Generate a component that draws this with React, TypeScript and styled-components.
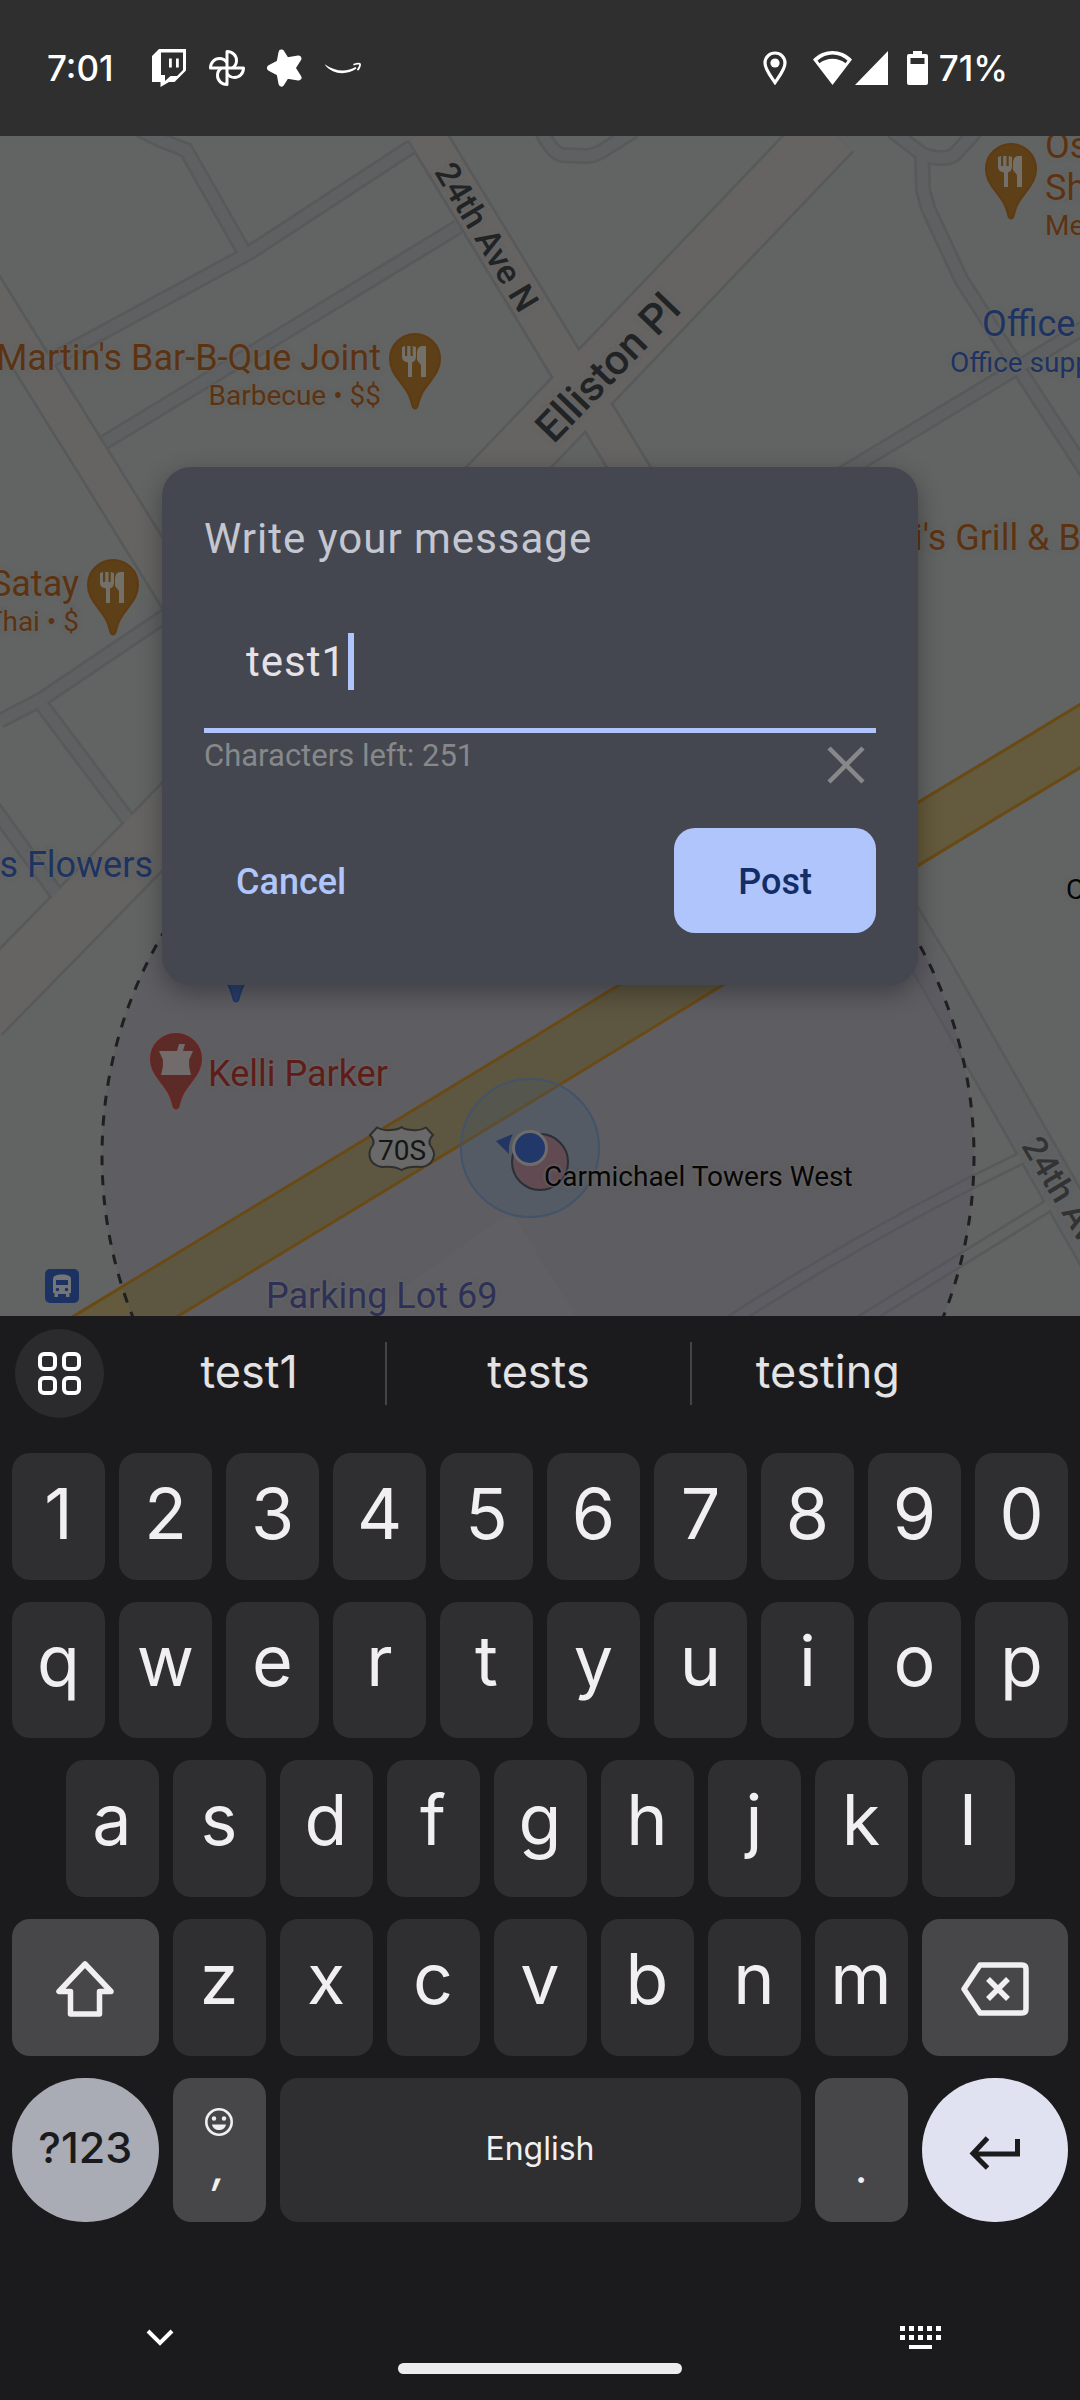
import React, { useState } from "react";
import styled, { createGlobalStyle, css } from "styled-components";

const GlobalStyle = createGlobalStyle`
  *, *::before, *::after { box-sizing: border-box; }
  html, body { margin: 0; padding: 0; background: #1b1b1d; }
  button, input { font: inherit; color: inherit; border: 0; background: none; margin: 0; padding: 0; }
  button { cursor: pointer; }
  svg { display: block; flex: none; }
`;

const systemFont = `Inter, "Liberation Sans", sans-serif`;
const appFont = `Roboto, "Liberation Sans", sans-serif`;

const Screen = styled.div`
  min-height: 100vh;
  display: flex;
  flex-direction: column;
  overflow: hidden;
  font-family: ${appFont};
`;

/* ---------- status bar ---------- */

const StatusBar = styled.header`
  height: 136px;
  padding: 0 72px 0 47px;
  display: flex;
  align-items: center;
  justify-content: space-between;
  background: #2f2f2f;
  color: #fff;
  font: 500 35px/40px ${systemFont};
`;

const StatusGroup = styled.div<{ $gap: number }>`
  display: flex;
  align-items: center;
  gap: ${(p) => p.$gap}px;
`;

const Clock = styled.time`
  width: 82px;
`;

const SignalPair = styled.span`
  display: flex;
  gap: 3px;
  margin: 0 19px 0 26px;
`;

const BatteryLevel = styled.span`
  margin-left: 11px;
`;

function TwitchIcon() {
  return (
    <svg width="36" height="38" viewBox="0 0 36 38">
      <path d="M8 0h27v21.500L23.500 33H18l-8.500 5v-5H1V7z" fill="#fff" />
      <path d="M10 3.500h22v17.500l-6 6h-6.500L14 32v-6H10z" fill="#2f2f2f" />
      <path d="M18 9.500h2.800v9H18zM25 9.500h2.800v9H25z" fill="#fff" />
    </svg>
  );
}

function PinwheelIcon() {
  return (
    <svg width="36" height="38" viewBox="0 0 36 38" fill="none" stroke="#fff" strokeWidth="3" strokeLinejoin="round">
      <path d="M18 19V2.500c5.500 0 9.500 4 9.500 9 0 3-1.500 5.800-4 7.500" />
      <path d="M18 19h16.500c0 5.500-4 9.500-9 9.500-3 0-5.800-1.500-7.500-4" />
      <path d="M18 19v16.500c-5.500 0-9.500-4-9.500-9 0-3 1.500-5.800 4-7.500" />
      <path d="M18 19H1.500c0-5.500 4-9.500 9-9.500 3 0 5.800 1.500 7.500 4" />
    </svg>
  );
}

function StarIcon() {
  return (
    <svg width="36" height="38" viewBox="0 0 36 38">
      <path
        d="M14.500 3.500l5 8L31.500 9.500 25.500 19l6 9.500-12-2L14.500 34.500l-2-10.500L3 19l9.500-5z"
        fill="#fff"
        stroke="#fff"
        strokeWidth="6"
        strokeLinejoin="round"
      />
    </svg>
  );
}

function SmileArrowIcon() {
  return (
    <svg width="36" height="38" viewBox="0 0 36 38">
      <path d="M0 15.500c11 7.500 22 7.500 30.500 2.500l1 1.500c-9 6.500-23 7-31.500-3.500z" fill="#fff" />
      <path d="M28.500 15.800c3-1.500 6.300-1.300 6.500-.8.300.8-.5 4.200-2.500 6.200" fill="none" stroke="#fff" strokeWidth="1.800" />
    </svg>
  );
}

function LocationIcon() {
  return (
    <svg width="24" height="34" viewBox="0 0 24 34">
      <path d="M12 2c5.500 0 10 4.300 10 10 0 6.500-6 13.500-10 19.500C8 25.500 2 18.500 2 12 2 6.300 6.500 2 12 2z" fill="none" stroke="#fff" strokeWidth="3.200" />
      <circle cx="12" cy="12" r="4.600" fill="#fff" />
    </svg>
  );
}

function WifiIcon() {
  return (
    <svg width="39" height="34" viewBox="0 0 39 34">
      <path d="M0 8.500C11-2.800 28-2.800 39 8.500L19.500 34z" fill="#fff" />
      <path d="M4.500 9.500C13 1.500 26 1.500 34.500 9.500l-2 2.700c-7-6-19-6-26 0z" fill="#2f2f2f" />
    </svg>
  );
}

function CellIcon() {
  return (
    <svg width="33" height="34" viewBox="0 0 33 34">
      <path d="M33 0v34H0z" fill="#fff" />
    </svg>
  );
}

function BatteryIcon() {
  return (
    <svg width="21" height="34" viewBox="0 0 21 34">
      <path d="M6 0h9v3h4a2 2 0 0 1 2 2v27a2 2 0 0 1-2 2H2a2 2 0 0 1-2-2V5a2 2 0 0 1 2-2h4z" fill="#fff" />
      <path d="M3.500 7h14v6h-14z" fill="#2f2f2f" />
    </svg>
  );
}

/* ---------- map ---------- */

const Stage = styled.main`
  flex: 1 0 auto;
  min-height: 1180px;
  display: grid;
  place-items: center;
  position: relative;
  overflow: hidden;
  background: #616462;
`;

const MapCanvas = styled.div`
  position: absolute;
  top: 0;
  left: 50%;
  width: 1080px;
  height: 1180px;
  margin-left: -540px;
`;

type Tone = "food" | "shop" | "health" | "parking" | "plain";

const tones: Record<Tone, string> = {
  food: "#5c3312",
  shop: "#1d3361",
  health: "#5f1d19",
  parking: "#2e3157",
  plain: "#060606",
};

const PlaceLabel = styled.div<{ $tone: Tone; $left?: number; $right?: number; $top: number }>`
  position: absolute;
  top: ${(p) => p.$top}px;
  ${(p) => (p.$left !== undefined ? css`left: ${p.$left}px;` : css`right: ${p.$right}px; text-align: right;`)}
  color: ${(p) => tones[p.$tone]};
  white-space: nowrap;
  text-shadow: 0 0 3px #666564, 0 0 3px #666564, 0 0 5px #666564;
`;

const PlaceName = styled.div`
  font-size: 36px;
  line-height: 42px;
`;

const PlaceNote = styled.div`
  font-size: 28px;
  line-height: 34px;
`;

const StreetLabel = styled.div<{ $x: number; $y: number; $angle: number; $size: number; $faded?: boolean }>`
  position: absolute;
  left: ${(p) => p.$x}px;
  top: ${(p) => p.$y}px;
  transform: translate(-50%, -50%) rotate(${(p) => p.$angle}deg);
  font-size: ${(p) => p.$size}px;
  font-weight: 500;
  line-height: 1;
  white-space: nowrap;
  color: ${(p) => (p.$faded ? "#313335" : "#212324")};
  text-shadow: 0 0 4px #656464, 0 0 4px #656464;
`;

const ShieldText = styled.div`
  position: absolute;
  left: 370px;
  top: 998px;
  width: 64px;
  text-align: center;
  font-size: 28px;
  line-height: 34px;
  color: #161616;
`;

type RoadKind = "street" | "alley" | "drive";
type Road = { d: string; kind: RoadKind };

const roads: Road[] = [
  { kind: "alley", d: "M140 130L160 140 186 150 243 250" },
  { kind: "alley", d: "M411 147L249 253 50 361" },
  { kind: "alley", d: "M458 227L105 442" },
  { kind: "alley", d: "M180 606L42 699 0 721" },
  { kind: "alley", d: "M42 705L130 822" },
  { kind: "alley", d: "M-6 808L58 896" },
  { kind: "alley", d: "M541 130Q552 153 562 155L586 156Q594 156 602 151L634 131" },
  { kind: "alley", d: "M892 131L922 154Q930 158 942 158 952 158 956 153L976 131" },
  { kind: "alley", d: "M922 154L923 190 928 208 961 279 1000 340 1090 478" },
  { kind: "alley", d: "M820 487L1090 324" },
  { kind: "drive", d: "M1030 1154Q880 1225 730 1322" },
  { kind: "drive", d: "M1056 1201L860 1322" },
  { kind: "street", d: "M-60 216L96 466 260 730" },
  { kind: "street", d: "M424 131L628 466 932 967 1110 1279" },
];

const roadWidth: Record<RoadKind, [number, number]> = { street: [40, 35], alley: [16, 11], drive: [14, 9] };
const roadFill: Record<RoadKind, string> = { street: "#656463", alley: "#5e6062", drive: "#616463" };

const highway = "M1100 724L918 834 540 1065 60 1356";

function PinShape({ x, y, fill, edge, icon }: { x: number; y: number; fill: string; edge: string; icon: "food" | "mortar" }) {
  return (
    <g transform={`translate(${x} ${y})`}>
      <path
        d="M26 1a25 25 0 0 1 25 25c0 9-4 15-9 21.500-6 8-10 12-12.500 22-1 4-1.500 6-3.500 6s-2.500-2-3.500-6c-2.500-10-6.500-14-12.500-22C5 41 1 35 1 26A25 25 0 0 1 26 1z"
        fill={fill}
        stroke={edge}
        strokeWidth="2"
      />
      {icon === "food" ? (
        <path
          d="M13 14l3-1v10h2.200V13h3.300v10h2.200V13l3.300 1v10c0 3-2 5-4 5.500V44h-4V29.500c-4-.5-6-2.500-6-5.500zM37 13v31h-5V32l-4-5v-6c0-5 1.500-7.500 5-8z"
          fill="#737069"
        />
      ) : (
        <path d="M9 18h18l2-7h6l-2 7h10l-4 9q-.5 7 2 15H11q2.500-8 2-15z" fill="#726b6b" />
      )}
    </g>
  );
}

function MapDrawing() {
  return (
    <svg width="1080" height="1180" viewBox="0 136 1080 1180" fill="none" aria-hidden="true">
      <clipPath id="reach">
        <circle cx="538" cy="1156" r="436" />
      </clipPath>
      <path d="M0 136H1080V1316H0z" fill="#616462" />
      {roads.map((r) => (
        <path key={`edge${r.d}`} d={r.d} stroke="#57595a" strokeWidth={roadWidth[r.kind][0]} />
      ))}
      <path d="M831 130L510 466 162 827 -20 1013" stroke="#57595a" strokeWidth="64" />
      {roads.map((r) => (
        <path key={r.d} d={r.d} stroke={roadFill[r.kind]} strokeWidth={roadWidth[r.kind][1]} />
      ))}
      <path d="M831 130L510 466 162 827 -20 1013" stroke="#656463" strokeWidth="59" />
      <path d="M780 716L932 967 1110 1279" stroke="#5f6162" strokeWidth="35" />

      <circle cx="538" cy="1156" r="436" fill="#5a5062" fillOpacity="0.3" />
      <path d="M365 1316L498 1220 514 1216 576 1316z" fill="#656566" fillOpacity="0.35" />

      <path d={highway} stroke="#6a4a14" strokeWidth="57" />
      <path d={highway} stroke="#645a3d" strokeWidth="51" />
      <path d={highway} stroke="#5d5640" strokeWidth="51" clipPath="url(#reach)" />
      <circle cx="538" cy="1156" r="436" stroke="#1f1f20" strokeWidth="3" strokeDasharray="10 10" />

      <PinShape x={210} y={926} fill="#2a406c" edge="#223a6b" icon="food" />
      <PinShape x={150} y={1033} fill="#5c2b28" edge="#6b241f" icon="mortar" />
      <PinShape x={389} y={333} fill="#5d4018" edge="#5f3a12" icon="food" />
      <PinShape x={87} y={559} fill="#5d4018" edge="#5f3a12" icon="food" />
      <PinShape x={985} y={143} fill="#5d4018" edge="#5f3a12" icon="food" />

      <g transform="translate(45 1269)">
        <rect width="34" height="34" rx="5" fill="#1b3263" />
        <path d="M8 10c0-3 3-4.500 9-4.500s9 1.500 9 4.500v14h-1.500v4H21v-3h-8v3H9.500v-4H8z" fill="#737577" />
        <path d="M11 11h12v5H11z" fill="#1b3263" />
        <circle cx="12.500" cy="20.500" r="1.700" fill="#1b3263" />
        <circle cx="21.500" cy="20.500" r="1.700" fill="#1b3263" />
      </g>

      <path
        d="M377 1127.500Q383 1131 390 1130 398 1130 401.500 1127 405 1130 413 1130 420 1131 426 1127.500L433 1135Q428 1140 430 1145 434 1150 434 1155 433 1165 422 1167 408 1166 401.500 1170 395 1166 382 1167 370 1165 369.500 1155 369 1150 373 1145 375 1140 370 1135z"
        fill="#69696a"
        stroke="#2f2f30"
        strokeWidth="2"
      />

      <circle cx="540" cy="1162" r="28" fill="#6f4448" stroke="#1d1d1f" strokeWidth="2" />
      <circle cx="530" cy="1148" r="69" fill="#44566a" fillOpacity="0.32" />
      <circle cx="530" cy="1148" r="69" stroke="#435369" strokeWidth="2" />
      <circle cx="530" cy="1148" r="18" fill="#6f6c6c" />
      <circle cx="530" cy="1148" r="15" fill="#22376a" />
      <path d="M496 1141l17-7q-5 9-4 20z" fill="#223563" />
    </svg>
  );
}

/* ---------- message dialog ---------- */

const Dialog = styled.form`
  position: relative;
  width: 70%;
  min-width: 480px;
  padding: 42px 42px 52px;
  border-radius: 29px;
  background: #44474f;
  box-shadow: 0 8px 26px rgba(0, 0, 0, 0.32);
`;

const DialogTitle = styled.label`
  display: block;
  font-size: 42px;
  line-height: 60px;
  letter-spacing: 1px;
  color: #c4c7d1;
`;

const Field = styled.div`
  display: flex;
  align-items: center;
  gap: 2px;
  height: 146px;
  margin-top: 18px;
  padding: 8px 42px 0;
  border-bottom: 5px solid #b0c5fb;
`;

const MessageInput = styled.input`
  field-sizing: content;
  min-width: 1px;
  max-width: 100%;
  height: 60px;
  outline: 0;
  font-size: 42px;
  line-height: 60px;
  letter-spacing: 1px;
  color: #e4e2e8;
  caret-color: transparent;
`;

const Caret = styled.span`
  width: 6px;
  height: 57px;
  background: #b0c5fb;
`;

const HelperRow = styled.div`
  display: flex;
  justify-content: space-between;
  align-items: flex-start;
  margin-bottom: 33px;
  font-size: 31px;
  line-height: 46px;
  color: #87888a;
`;

const ClearButton = styled.button`
  display: grid;
  place-items: center;
  width: 60px;
  height: 60px;
  margin-top: 2px;
`;

const Actions = styled.div`
  display: flex;
  justify-content: space-between;
`;

const ActionButton = styled.button<{ $filled?: boolean }>`
  height: 105px;
  padding: 2px ${(p) => (p.$filled ? 64 : 32)}px 0;
  border-radius: 21px;
  font-size: 36px;
  font-weight: 500;
  line-height: 42px;
  background: ${(p) => (p.$filled ? "#b0c5fb" : "transparent")};
  color: ${(p) => (p.$filled ? "#132d66" : "#b0c5fb")};
`;

/* ---------- keyboard ---------- */

const Keyboard = styled.section`
  background: #1b1b1d;
  color: #f1eff1;
  font-family: ${systemFont};
`;

const SuggestionBar = styled.div`
  display: flex;
  align-items: center;
  height: 137px;
  padding: 0 116px 22px 15px;
`;

const ToolsButton = styled.button`
  flex: none;
  display: grid;
  place-items: center;
  width: 89px;
  height: 89px;
  margin-right: 9px;
  border-radius: 50%;
  background: #2b2b2d;
`;

const Suggestion = styled.button<{ $grow: number }>`
  flex: ${(p) => p.$grow} 1 0;
  height: 63px;
  padding-bottom: 3px;
  font-size: 45px;
  line-height: 60px;
  color: #e3e2e4;

  & + & {
    border-left: 2px solid #444447;
  }
`;

const Keys = styled.div`
  display: flex;
  flex-direction: column;
  gap: 22px;
  padding: 0 12px;
`;

const KeyRow = styled.div<{ $height: number }>`
  display: grid;
  grid-template-columns: repeat(20, minmax(0, 1fr));
  column-gap: 14px;
  height: ${(p) => p.$height}px;
`;

type KeyKind = "digit" | "letter" | "side" | "space" | "symbols" | "enter" | "punct";

const keyLook = {
  digit: css`background: #2f2f31; font-size: 70px; padding-bottom: 6px;`,
  letter: css`background: #2f2f31; font-size: 70px; padding-bottom: 18px;`,
  side: css`background: #474749; padding-top: 2px;`,
  space: css`background: #2f2f31; font-size: 32px; padding-bottom: 2px;`,
  symbols: css`background: #a9acb4; color: #1b1b1d; font-size: 43px; font-weight: 500; border-radius: 72px; padding-bottom: 6px;`,
  enter: css`background: #e1e2f1; color: #1b1b1d; border-radius: 72px; padding-top: 6px;`,
  punct: css`background: #474749; font-size: 44px; justify-content: flex-end; gap: 8px; padding-bottom: 33px;`,
};

const Key = styled.button<{ $kind: KeyKind; $span?: number; $start?: number }>`
  display: flex;
  flex-direction: column;
  align-items: center;
  justify-content: center;
  grid-column: ${(p) => (p.$start ? `${p.$start} / ` : "")}span ${(p) => p.$span ?? 2};
  border-radius: 18px;
  line-height: 1;
  ${(p) => keyLook[p.$kind]}
`;

const Comma = styled.span`
  font-style: italic;
  font-weight: 500;
`;

const NavRow = styled.nav`
  display: flex;
  justify-content: space-between;
  padding: 92px 136px 0;
`;

const NavButton = styled.button`
  display: grid;
  place-items: center;
  width: 48px;
  height: 48px;
`;

const HomePill = styled.div`
  width: 284px;
  height: 11px;
  margin: 1px auto 26px;
  border-radius: 6px;
  background: #ececec;
`;

const toolTiles = [
  [2, 2],
  [26, 2],
  [2, 26],
  [26, 26],
];

const MAX_LENGTH = 256;

export default function App() {
  const [message, setMessage] = useState("test1");

  return (
    <>
      <GlobalStyle />
      <Screen>
        <StatusBar>
          <StatusGroup $gap={22}>
            <Clock>7:01</Clock>
            <TwitchIcon />
            <PinwheelIcon />
            <StarIcon />
            <SmileArrowIcon />
          </StatusGroup>
          <StatusGroup $gap={0}>
            <LocationIcon />
            <SignalPair>
              <WifiIcon />
              <CellIcon />
            </SignalPair>
            <BatteryIcon />
            <BatteryLevel>71%</BatteryLevel>
          </StatusGroup>
        </StatusBar>

        <Stage>
          <MapCanvas>
            <MapDrawing />
            <PlaceLabel $tone="food" $right={699} $top={201}>
              <PlaceName>Martin's Bar-B-Que Joint</PlaceName>
              <PlaceNote>Barbecue • $$</PlaceNote>
            </PlaceLabel>
            <PlaceLabel $tone="food" $right={1001} $top={427}>
              <PlaceName>Satay</PlaceName>
              <PlaceNote>Thai • $</PlaceNote>
            </PlaceLabel>
            <PlaceLabel $tone="food" $left={1045} $top={-11}>
              <PlaceName>Os</PlaceName>
              <PlaceName>Sh</PlaceName>
              <PlaceNote>Me</PlaceNote>
            </PlaceLabel>
            <PlaceLabel $tone="shop" $left={982} $top={167}>
              <PlaceName>Office</PlaceName>
            </PlaceLabel>
            <PlaceLabel $tone="shop" $left={950} $top={210}>
              <PlaceNote>Office supp</PlaceNote>
            </PlaceLabel>
            <PlaceLabel $tone="food" $left={914} $top={381}>
              <PlaceName>i's Grill &amp; B</PlaceName>
            </PlaceLabel>
            <PlaceLabel $tone="shop" $right={927} $top={708}>
              <PlaceName>s Flowers</PlaceName>
            </PlaceLabel>
            <PlaceLabel $tone="plain" $left={1066} $top={737}>
              <PlaceNote>C</PlaceNote>
            </PlaceLabel>
            <PlaceLabel $tone="health" $left={208} $top={917}>
              <PlaceName>Kelli Parker</PlaceName>
            </PlaceLabel>
            <PlaceLabel $tone="plain" $left={544} $top={1024}>
              <PlaceNote>Carmichael Towers West</PlaceNote>
            </PlaceLabel>
            <PlaceLabel $tone="parking" $left={266} $top={1139}>
              <PlaceName>Parking Lot 69</PlaceName>
            </PlaceLabel>
            <StreetLabel $x={487} $y={101} $angle={59} $size={34}>
              24th Ave N
            </StreetLabel>
            <StreetLabel $x={608} $y={232} $angle={-46} $size={42}>
              Elliston Pl
            </StreetLabel>
            <StreetLabel $x={1074} $y={1075} $angle={59} $size={34} $faded>
              24th Ave N
            </StreetLabel>
            <ShieldText>70S</ShieldText>
          </MapCanvas>

          <Dialog onSubmit={(e) => e.preventDefault()}>
            <DialogTitle htmlFor="message">Write your message</DialogTitle>
            <Field>
              <MessageInput
                id="message"
                type="text"
                maxLength={MAX_LENGTH}
                value={message}
                onChange={(e) => setMessage(e.target.value)}
              />
              <Caret />
            </Field>
            <HelperRow>
              <span>Characters left: {MAX_LENGTH - message.length}</span>
              <ClearButton type="button" aria-label="Clear message" onClick={() => setMessage("")}>
                <svg width="38" height="38" viewBox="0 0 38 38" stroke="#87888a" strokeWidth="4.500">
                  <path d="M2 2l34 34M36 2L2 36" />
                </svg>
              </ClearButton>
            </HelperRow>
            <Actions>
              <ActionButton type="button">Cancel</ActionButton>
              <ActionButton type="submit" $filled>
                Post
              </ActionButton>
            </Actions>
          </Dialog>
        </Stage>

        <Keyboard>
          <SuggestionBar>
            <ToolsButton aria-label="Keyboard tools">
              <svg width="43" height="43" viewBox="0 0 43 43" fill="none" stroke="#fff" strokeWidth="4">
                {toolTiles.map(([x, y]) => (
                  <rect key={`${x}-${y}`} x={x} y={y} width="15" height="15" rx="4" />
                ))}
              </svg>
            </ToolsButton>
            <Suggestion $grow={9}>test1</Suggestion>
            <Suggestion $grow={10}>tests</Suggestion>
            <Suggestion $grow={9}>testing</Suggestion>
          </SuggestionBar>

          <Keys>
            <KeyRow $height={127}>
              {[..."1234567890"].map((k) => (
                <Key key={k} $kind="digit">{k}</Key>
              ))}
            </KeyRow>
            <KeyRow $height={136}>
              {[..."qwertyuiop"].map((k) => (
                <Key key={k} $kind="letter">{k}</Key>
              ))}
            </KeyRow>
            <KeyRow $height={137}>
              {[..."asdfghjkl"].map((k, i) => (
                <Key key={k} $kind="letter" $start={i === 0 ? 2 : undefined}>{k}</Key>
              ))}
            </KeyRow>
            <KeyRow $height={137}>
              <Key $kind="side" $span={3} aria-label="Shift">
                <svg width="60" height="58" viewBox="0 0 60 58" fill="none" stroke="#f1eff1" strokeWidth="5.500" strokeLinejoin="round">
                  <path d="M30 4L4 31.500h11.500V54h29V31.500H56z" />
                </svg>
              </Key>
              {[..."zxcvbnm"].map((k) => (
                <Key key={k} $kind="letter">{k}</Key>
              ))}
              <Key $kind="side" $span={3} aria-label="Backspace">
                <svg width="68" height="54" viewBox="0 0 68 54" fill="none" stroke="#f1eff1" strokeWidth="5.500" strokeLinejoin="round">
                  <path d="M19 3h42q4 0 4 4v40q0 4-4 4H19L3 27z" />
                  <path d="M27 17l20 20M47 17L27 37" />
                </svg>
              </Key>
            </KeyRow>
            <KeyRow $height={144}>
              <Key $kind="symbols" $span={3}>?123</Key>
              <Key $kind="punct">
                <svg width="30" height="30" viewBox="0 0 30 30" fill="none" aria-hidden="true">
                  <circle cx="15" cy="15" r="12.700" stroke="#f1eff1" strokeWidth="2.600" />
                  <circle cx="10" cy="11.500" r="2.200" fill="#f1eff1" />
                  <circle cx="20" cy="11.500" r="2.200" fill="#f1eff1" />
                  <path d="M8 17.500h14c-1 4-3.500 5.500-7 5.500s-6-1.500-7-5.500z" fill="#f1eff1" />
                </svg>
                <Comma>,</Comma>
              </Key>
              <Key $kind="space" $span={10}>English</Key>
              <Key $kind="punct">.</Key>
              <Key $kind="enter" $span={3} aria-label="Enter">
                <svg width="52" height="34" viewBox="0 0 52 34" fill="none" stroke="#1b1b1d" strokeWidth="5">
                  <path d="M48.500 3v15H5M18.500 2L4 17.500 18.500 32" />
                </svg>
              </Key>
            </KeyRow>
          </Keys>

          <NavRow>
            <NavButton aria-label="Hide keyboard">
              <svg width="28" height="18" viewBox="0 0 28 18" fill="none" stroke="#fff" strokeWidth="4">
                <path d="M2 2l12 12L26 2" />
              </svg>
            </NavButton>
            <NavButton aria-label="Switch keyboard">
              <svg width="41" height="24" viewBox="0 0 41 24" fill="#fff">
                {[0, 9, 18, 27, 36].map((x) => (
                  <path key={x} d={`M${x} 0h5v5h-5zM${x} 9h5v5h-5z`} />
                ))}
                <path d="M9 19h23v4H9z" />
              </svg>
            </NavButton>
          </NavRow>
          <HomePill />
        </Keyboard>
      </Screen>
    </>
  );
}
